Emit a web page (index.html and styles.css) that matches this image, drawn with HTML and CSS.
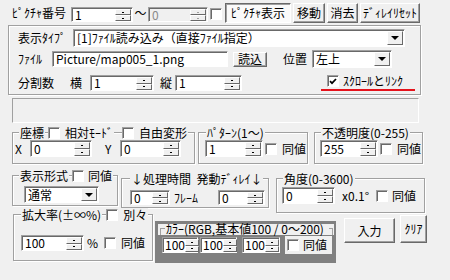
FILE: index.html
```html
<!DOCTYPE html>
<html lang="ja">

<head>
    <meta charset="UTF-8">
    <title>ピクチャ</title>
    <link rel="stylesheet" href="styles.css">
</head>

<body>
    <div class="dlg">
        <!-- ピクチャ番号と操作ボタン -->
        <div class="top">
            <span class="lbl pic-lbl">ﾋﾟｸﾁｬ番号</span>
            <div class="edit pic-no"><span class="val">1</span><span class="spin"><i></i><i></i></span></div>
            <span class="lbl tilde">～</span>
            <div class="edit off pic-to"><span class="val">0</span><span class="spin"><i></i><i></i></span></div>
            <span class="cb to-cb"></span>
            <div class="btn down b-show">ﾋﾟｸﾁｬ表示</div>
            <div class="btn b-move">移動</div>
            <div class="btn b-del">消去</div>
            <div class="btn b-reset">ﾃﾞｨﾚｲﾘｾｯﾄ</div>
        </div>

        <!-- 表示タイプ -->
        <div class="grp g-type">
            <div class="line">
                <span class="lbl type-lbl">表示ﾀｲﾌﾟ</span>
                <div class="combo type-cmb"><span class="val">[1]ﾌｧｲﾙ読み込み（直接ﾌｧｲﾙ指定）</span><span class="drop"></span></div>
            </div>
            <div class="line file-line">
                <span class="lbl file-lbl">ﾌｧｲﾙ</span>
                <div class="edit file-ed"><span class="val">Picture/map005_1.png</span></div>
                <div class="btn b-load">読込</div>
                <span class="lbl pos-lbl">位置</span>
                <div class="combo pos-cmb"><span class="val">左上</span><span class="drop"></span></div>
            </div>
            <div class="line div-line">
                <span class="lbl div-lbl">分割数</span>
                <span class="lbl yoko">横</span>
                <div class="edit div-x"><span class="val">1</span><span class="spin"><i></i><i></i></span></div>
                <span class="lbl tate">縦</span>
                <div class="edit div-y"><span class="val">1</span><span class="spin"><i></i><i></i></span></div>
                <div class="mark">
                    <span class="cb"><svg width="8" height="7" viewBox="0 0 8 7"><path d="M1 3.2l2 2 4-4.2" stroke="#000" stroke-width="1.7" fill="none"/></svg></span>
                    <span class="lbl">ｽｸﾛｰﾙとﾘﾝｸ</span>
                </div>
            </div>
        </div>

        <div class="panel"></div>

        <!-- 座標・パターン・不透明度 -->
        <div class="row row2">
            <div class="grp g-xy">
                <div class="ttl">
                    <span class="tx">座標</span>
                    <span class="ck ck-rel"><span class="cb"></span><span class="lbl">相対ﾓｰﾄﾞ</span></span>
                    <span class="ck ck-free"><span class="cb"></span><span class="lbl">自由変形</span></span>
                </div>
                <div class="line xy-line">
                    <span class="lbl x-lbl">X</span>
                    <div class="edit xy-x"><span class="val">0</span><span class="spin"><i></i><i></i></span></div>
                    <span class="lbl y-lbl">Y</span>
                    <div class="edit xy-y"><span class="val">0</span><span class="spin"><i></i><i></i></span></div>
                </div>
            </div>
            <div class="grp g-pat">
                <div class="ttl"><span class="tx">ﾊﾟﾀｰﾝ(1～)</span></div>
                <div class="line pat-line">
                    <div class="edit pat-ed"><span class="val">1</span><span class="spin"><i></i><i></i></span></div>
                    <span class="ck"><span class="cb"></span><span class="lbl">同値</span></span>
                </div>
            </div>
            <div class="grp g-alpha">
                <div class="ttl"><span class="tx">不透明度(0-255)</span></div>
                <div class="line alpha-line">
                    <div class="edit alpha-ed"><span class="val">255</span><span class="spin"><i></i><i></i></span></div>
                    <span class="ck"><span class="cb"></span><span class="lbl">同値</span></span>
                </div>
            </div>
        </div>

        <!-- 表示形式・処理時間・角度 -->
        <div class="row row3">
            <div class="grp g-mode">
                <div class="ttl">
                    <span class="tx">表示形式</span>
                    <span class="ck"><span class="cb"></span><span class="lbl">同値</span></span>
                </div>
                <div class="combo mode-cmb"><span class="val">通常</span><span class="drop"></span></div>
            </div>
            <div class="grp g-time">
                <div class="ttl"><span class="tx">↓処理時間&nbsp; 発動ﾃﾞｨﾚｲ↓</span></div>
                <div class="line time-line">
                    <div class="edit time-ed"><span class="val">0</span><span class="spin"><i></i><i></i></span></div>
                    <span class="lbl frame-lbl">ﾌﾚｰﾑ</span>
                    <div class="edit delay-ed"><span class="val">0</span><span class="spin"><i></i><i></i></span></div>
                </div>
            </div>
            <div class="grp g-ang">
                <div class="ttl"><span class="tx">角度(0-3600)</span></div>
                <div class="line ang-line">
                    <div class="edit ang-ed"><span class="val">0</span><span class="spin"><i></i><i></i></span></div>
                    <span class="lbl unit">x0.1°</span>
                    <span class="ck"><span class="cb"></span><span class="lbl">同値</span></span>
                </div>
            </div>
        </div>

        <!-- 拡大率・カラー・入力 -->
        <div class="row row4">
            <div class="grp g-zoom">
                <div class="ttl">
                    <span class="tx">拡大率(±∞%)</span>
                    <span class="ck ck-sep"><span class="cb"></span><span class="lbl">別々</span></span>
                </div>
                <div class="line zoom-line">
                    <div class="edit zoom-ed"><span class="val">100</span><span class="spin"><i></i><i></i></span></div>
                    <span class="lbl pct">%</span>
                    <span class="ck"><span class="cb"></span><span class="lbl">同値</span></span>
                </div>
            </div>
            <div class="color">
                <div class="ctl"><span class="lbl">ｶﾗｰ(RGB,基本値100 / 0～200)</span></div>
                <div class="line crow">
                    <div class="edit c-ed c-r"><span class="val">100</span><span class="spin"><i></i><i></i></span></div>
                    <div class="edit c-ed c-g"><span class="val">100</span><span class="spin"><i></i><i></i></span></div>
                    <div class="edit c-ed c-b"><span class="val">100</span><span class="spin"><i></i><i></i></span></div>
                    <span class="ck c-ck"><span class="cb"></span><span class="lbl">同値</span></span>
                </div>
            </div>
            <div class="btn b-in">入力</div>
            <div class="btn b-clr">ｸﾘｱ</div>
        </div>
    </div>
</body>

</html>
```

FILE: styles.css
```css
* {
    margin: 0;
    padding: 0;
    box-sizing: border-box;
}

body {
    background-color: #f0f0f0;
    color: #000;
    font: 12px/14px "Noto Sans CJK JP", "Noto Sans", sans-serif;
}

.dlg {
    width: 450px;
    height: 280px;
    padding-top: 3px;
    overflow: hidden;
}

.row {
    display: flex;
    align-items: flex-start;
}

.line {
    display: flex;
    align-items: center;
}

.lbl {
    flex: none;
    white-space: nowrap;
}

/* エディット */
.edit {
    flex: none;
    display: flex;
    align-items: stretch;
    height: 16px;
    background-color: #fff;
    border: 1px solid;
    border-color: #a0a0a0 #fff #fff #a0a0a0;
    box-shadow: inset 1px 1px #696969;
}

.edit .val {
    flex: 1;
    display: flex;
    align-items: center;
    padding-left: 3px;
    white-space: nowrap;
    line-height: 12px;
}

.edit.off {
    background-color: #f0f0f0;
    color: #8a8a8a;
}

.spin {
    flex: none;
    display: flex;
    flex-direction: column;
    width: 17px;
    padding: 1px 1px 0 0;
}

.spin i {
    flex: 1;
    display: flex;
    align-items: center;
    justify-content: center;
    background-color: #f0f0f0;
    border: 1px solid;
    border-color: #fff #696969 #696969 #fff;
}

.spin i::after {
    content: "";
    width: 2px;
    height: 1px;
    background-color: #000;
}

.off .spin i::after {
    background-color: #a0a0a0;
}

/* コンボ */
.combo {
    flex: none;
    display: flex;
    align-items: center;
    height: 18px;
    background-color: #fff;
    border: 1px solid;
    border-color: #a0a0a0 #fff #fff #a0a0a0;
    box-shadow: inset 1px 1px #696969;
    padding: 1px 1px 1px 0;
}

.combo .val {
    flex: 1;
    padding-left: 3px;
    white-space: nowrap;
    line-height: 12px;
}

.drop {
    flex: none;
    align-self: stretch;
    width: 16px;
    display: flex;
    align-items: center;
    justify-content: center;
    background-color: #f0f0f0;
    border: 1px solid;
    border-color: #fff #696969 #696969 #fff;
}

.drop::after {
    content: "";
    border-style: solid;
    border-width: 4px 4px 0;
    border-color: #000 transparent transparent;
}

/* チェックボックス */
.cb {
    flex: none;
    display: flex;
    align-items: center;
    justify-content: center;
    width: 12px;
    height: 12px;
    background-color: #fff;
    border: 1px solid;
    border-color: #a0a0a0 #fff #fff #a0a0a0;
    box-shadow: inset 1px 1px #696969;
}

.ck {
    display: flex;
    align-items: center;
    background-color: #f0f0f0;
}

.ck .lbl {
    padding: 0 1px 0 5px;
}

/* ボタン */
.btn {
    flex: none;
    display: flex;
    align-items: center;
    justify-content: center;
    white-space: nowrap;
    background-color: #f0f0f0;
    border: 1px solid;
    border-color: #fff #696969 #696969 #fff;
    box-shadow: inset -1px -1px #a0a0a0;
}

.btn.down {
    background-color: #fafafa;
    border-color: #696969 #fff #fff #696969;
    box-shadow: inset 1px 1px #a0a0a0;
}

/* グループ */
.grp {
    flex: none;
    border: 1px solid #a0a0a0;
    box-shadow: inset 1px 1px #fff, 1px 1px #fff;
}

.ttl {
    display: flex;
    height: 14px;
    margin-top: -7px;
}

.ttl .tx {
    padding: 0 1px;
    white-space: nowrap;
    background-color: #f0f0f0;
}

/* 上段 */
.top {
    display: flex;
    align-items: center;
    height: 20px;
    padding-left: 12px;
}

.top .edit {
    align-self: flex-end;
    height: 15px;
    margin-bottom: 1px;
}

.pic-lbl {
    width: 59px;
}

.pic-no {
    width: 62px;
}

.tilde {
    width: 15px;
    text-align: center;
}

.pic-to {
    width: 60px;
}

.to-cb {
    margin: 2px 0 0 2px;
}

.b-show {
    width: 66px;
    height: 20px;
    margin-left: 3px;
}

.b-move {
    width: 32px;
    height: 20px;
    margin-left: 2px;
}

.b-del {
    width: 31px;
    height: 20px;
    margin-left: 2px;
}

.b-reset {
    width: 60px;
    height: 20px;
    margin-left: 2px;
}

/* 表示タイプ */
.g-type {
    width: 413px;
    height: 70px;
    margin: 2px 0 0 8px;
    padding: 3px 0 0 9px;
}

.type-lbl {
    width: 55px;
}

.type-cmb {
    width: 332px;
}

.file-line {
    margin-top: 3px;
}

.file-lbl {
    width: 34px;
}

.file-ed {
    width: 176px;
}

.b-load {
    width: 34px;
    height: 15px;
    margin-left: 5px;
}

.pos-lbl {
    width: 29px;
    margin-left: 16px;
}

.pos-cmb {
    width: 80px;
}

.div-line {
    height: 18px;
    margin-top: 6px;
}

.div-lbl {
    width: 52px;
}

.yoko {
    width: 20px;
}

.div-x {
    width: 64px;
}

.tate {
    width: 21px;
    padding-left: 6px;
}

.div-y {
    width: 67px;
}

.mark {
    align-self: flex-start;
    display: flex;
    align-items: center;
    width: 94px;
    height: 16px;
    margin: 1px 0 0 79px;
    padding: 0 0 2px 6px;
    border-bottom: 2px solid #e5121b;
}

.mark .lbl {
    padding-left: 4px;
}

.panel {
    width: 407px;
    height: 25px;
    margin: 3px 0 0 12px;
    border: 1px solid;
    border-color: #a0a0a0 #fff #fff #a0a0a0;
}

/* 座標の段 */
.row2 {
    margin-top: 9px;
}

.g-xy {
    width: 183px;
    height: 32px;
    margin-left: 12px;
}

.g-xy .ttl {
    padding-left: 6px;
}

.ck-rel {
    margin-left: 3px;
}

.ck-free {
    margin-left: 8px;
}

.x-lbl {
    width: 17px;
    padding-left: 2px;
}

.xy-x {
    width: 62px;
    height: 17px;
}

.y-lbl {
    width: 28px;
    padding-left: 13px;
}

.xy-y {
    width: 61px;
    height: 17px;
}

.g-pat {
    width: 110px;
    height: 32px;
    margin-left: 3px;
}

.g-pat .ttl {
    padding-left: 7px;
}

.pat-line {
    padding-left: 6px;
}

.pat-ed,
.alpha-ed {
    width: 58px;
    height: 17px;
    margin-right: 2px;
}

.g-alpha {
    width: 109px;
    height: 32px;
    margin-left: 6px;
}

.g-alpha .ttl {
    padding-left: 6px;
}

.alpha-line {
    padding-left: 5px;
}

/* 表示形式の段 */
.g-mode {
    width: 106px;
    height: 31px;
    margin: 11px 0 0 12px;
}

.g-mode .ttl {
    padding-left: 6px;
}

.g-mode .ck {
    margin-left: 3px;
}

.g-mode .ck .lbl {
    padding-left: 4px;
}

.mode-cmb {
    width: 75px;
    height: 17px;
    margin: 3px 0 0 11px;
}

.g-time {
    width: 148px;
    height: 30px;
    margin: 14px 0 0 3px;
}

.g-time .ttl {
    padding-left: 8px;
}

.time-line {
    margin-top: 4px;
    padding-left: 8px;
}

.time-ed {
    width: 40px;
    height: 15px;
}

.frame-lbl {
    width: 48px;
    padding-left: 4px;
}

.delay-ed {
    width: 47px;
    height: 15px;
}

.g-ang {
    width: 149px;
    height: 35px;
    margin: 14px 0 0 7px;
}

.g-ang .ttl {
    padding-left: 6px;
}

.ang-line {
    margin-top: 1px;
    padding-left: 5px;
}

.ang-ed {
    width: 53px;
    height: 17px;
}

.unit {
    width: 41px;
    padding-left: 7px;
}

.g-ang .ck .lbl {
    padding-left: 4px;
}

/* 拡大率の段 */
.g-zoom {
    width: 140px;
    height: 47px;
    margin: 1px 0 0 13px;
}

.g-zoom .ttl {
    padding-left: 7px;
}

.ck-sep {
    margin-left: 4px;
}

.zoom-line {
    margin-top: 13px;
    padding-left: 7px;
}

.zoom-ed {
    width: 63px;
}

.pct {
    width: 20px;
    padding-left: 3px;
}

.color {
    flex: none;
    width: 181px;
    height: 42px;
    margin: 8px 0 0 2px;
    padding: 3px 2px 0 3px;
    background-color: #808080;
}

.ctl {
    display: flex;
    height: 11px;
    background-color: #f0f0f0;
}

.ctl::before {
    content: "";
    flex: none;
    width: 4px;
    margin: 4px 0 0 2px;
    border-top: 1px solid #a0a0a0;
    border-left: 1px solid #a0a0a0;
}

.ctl::after {
    content: "";
    flex: none;
    width: 3px;
    margin: 4px 1px 0 auto;
    border-top: 1px solid #a0a0a0;
    border-right: 1px solid #a0a0a0;
}

.ctl .lbl {
    margin: -2px 0 0 1px;
    line-height: 14px;
}

.crow {
    margin-top: 1px;
}

.c-ed {
    width: 37px;
}

.c-ed .val {
    padding-left: 2px;
}

.c-ed .spin {
    width: 15px;
}

.c-r {
    width: 36px;
    margin-left: 4px;
}

.c-g {
    margin-left: 2px;
}

.c-b {
    width: 38px;
    margin-left: 5px;
}

.c-ck {
    width: 47px;
    height: 18px;
    margin-left: 5px;
    padding-left: 2px;
}

.c-ck .lbl {
    padding-left: 4px;
}

.b-in {
    width: 51px;
    height: 25px;
    margin: 5px 0 0 8px;
}

.b-clr {
    width: 27px;
    height: 28px;
    margin: 2px 0 0 5px;
}
```
